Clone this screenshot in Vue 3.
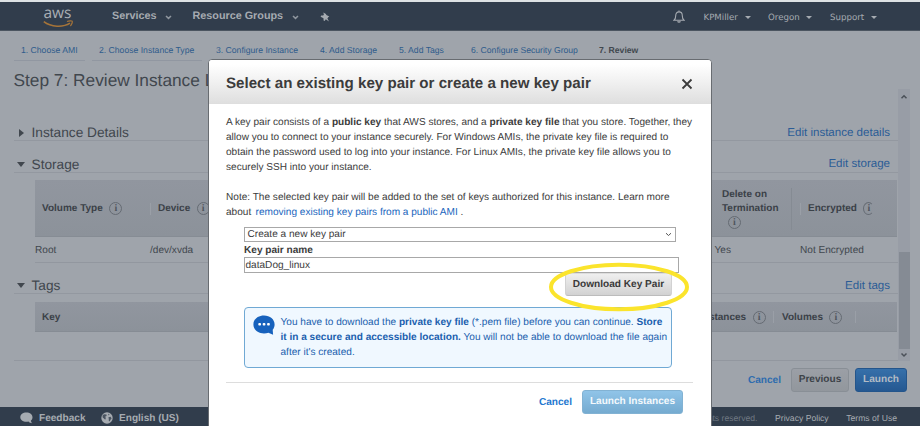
<script setup>
const steps = [
  { label: '1. Choose AMI', width: 71 },
  { label: '2. Choose Instance Type', width: 110 },
  { label: '3. Configure Instance', width: 97 },
  { label: '4. Add Storage', width: 72 },
  { label: '5. Add Tags', width: 65 },
  { label: '6. Configure Security Group', width: 121 },
]
</script>

<template>
  <div class="page">
    <header class="topbar">
      <div class="logo">
        <span class="logo-text">aws</span>
        <svg class="smile" viewBox="0 0 31 8" width="31" height="8">
          <path d="M.8 1.600C8 7.200 20 7.700 27 3.200" stroke-width="1.600" />
          <path d="M24 1.500c2-.9 4.700-.9 5.200-.3.4.7-.3 3.300-1.800 4.800" stroke-width="1.200" />
        </svg>
      </div>
      <span class="menu services">Services</span>
      <svg class="chev" viewBox="0 0 7 5" width="7" height="5"><path d="M1 1l2.500 2.400L6 1" /></svg>
      <span class="menu groups">Resource Groups</span>
      <svg class="chev" viewBox="0 0 7 5" width="7" height="5"><path d="M1 1l2.500 2.400L6 1" /></svg>
      <svg class="pin" viewBox="0 0 10 10" width="10" height="10">
        <path d="M3.300.4L6 1.900 6.300 3.100 9.300 4.400 8.200 5.200 7.400 6.500 9 9.600 5.800 7.300 4.600 9 3.600 8.500 3.500 6.200.6 4.700 1.200 3.600 3.200 3.500 3.900 2.400z" />
      </svg>
      <svg class="bell" viewBox="0 0 12 13" width="12" height="13">
        <path d="M6 .6v1.200M1 10.200c1.700-1.300 1.700-2.300 1.700-4.500C2.700 3.300 4 1.900 6 1.900s3.300 1.400 3.300 3.800c0 2.200 0 3.200 1.700 4.500z" />
        <path d="M4.600 11.300c.4 1.100 2.400 1.100 2.800 0" />
      </svg>
      <span class="account user">KPMiller<i class="caret"></i></span>
      <span class="account region">Oregon<i class="caret"></i></span>
      <span class="account support">Support<i class="caret"></i></span>
    </header>

    <nav class="steps">
      <span v-for="s in steps" :key="s.label" class="step" :style="{ width: s.width + 'px' }">{{ s.label }}</span>
      <span class="step current">7. Review</span>
    </nav>
    <h1>Step 7: Review Instance L</h1>

    <div class="scroller">
      <main class="content">
        <section class="section details">
          <i class="tri right"></i><h2>Instance Details</h2><a>Edit instance details</a>
        </section>
        <section class="section storage">
          <i class="tri down"></i><h2>Storage</h2><a>Edit storage</a>
        </section>
        <div class="table volumes-head">
          <div class="cell">Volume Type<i class="info">i</i></div>
          <div class="cell sep">Device<i class="info">i</i></div>
          <div class="cell tall">Delete on<br>Termination<br><i class="info under">i</i></div>
          <div class="cell sep enc">Encrypted<i class="info cut">i</i></div>
        </div>
        <div class="volumes-row">
          <span>Root</span><span>/dev/xvda</span><span>Yes</span><span>Not Encrypted</span>
        </div>
        <section class="section tags">
          <i class="tri down"></i><h2>Tags</h2><a>Edit tags</a>
        </section>
        <div class="table tags-head">
          <div class="cell">Key</div>
          <div class="cell inst">Instances<i class="info">i</i></div>
          <div class="cell sep vols">Volumes<i class="info">i</i></div>
          <div class="cell sep"></div>
        </div>
      </main>
      <div class="scrollbar">
        <svg viewBox="0 0 8 6" width="8" height="6"><path d="M1.500 4.300L4 1.800l2.500 2.500" /></svg>
        <div class="thumb"></div>
        <svg viewBox="0 0 8 6" width="8" height="6"><path d="M1.500 1.500L4 4l2.500-2.500" /></svg>
      </div>
    </div>

    <div class="actions">
      <a class="cancel">Cancel</a>
      <button class="btn previous">Previous</button>
      <button class="btn launch">Launch</button>
    </div>

    <footer class="footer">
      <svg class="bubble" viewBox="0 0 13 12" width="13" height="12">
        <path d="M6.400.6C9.900.6 12.500 2.600 12.500 5.200c0 1.500-.6 2.600-1.600 3.400.1 1.200.6 2 1.300 2.700-1.600-.1-2.900-.7-3.700-1.700-.7.2-1.400.2-2.100.2C2.900 9.800.3 7.800.3 5.200S2.900.6 6.400.6z" />
      </svg>
      <b class="feedback">Feedback</b>
      <svg class="globe" viewBox="0 0 12 12" width="12" height="12">
        <circle cx="6" cy="6" r="5.700" />
        <path d="M1.500 3.400L3 2.200 5.500 2.600 5.600 4 4.300 4.600 4.800 6.200 4.200 7.800 2.600 6.200 1.700 5.500zM7.200 1.700L8.600 2.200 7.500 3.600zM7.400 5.200L9.600 4.700 10.600 6.400 9.300 8 8.700 9.600 7.700 8.500 7.800 7z" class="land" />
      </svg>
      <b class="lang">English (US)</b>
      <span class="legal">
        <span class="rights">All rights reserved.</span>
        <span class="privacy">Privacy Policy</span>
        <span class="terms">Terms of Use</span>
      </span>
    </footer>

    <div class="modal">
      <div class="modal-head">
        <h3>Select an existing key pair or create a new key pair</h3>
        <svg viewBox="0 0 12 12" width="12" height="12"><path d="M1.500 1.500l9 9M10.500 1.500L1.500 10.500" /></svg>
      </div>
      <div class="modal-body">
        <p>
          A key pair consists of a <b>public key</b> that AWS stores, and a <b>private key file</b> that you store. Together, they<br>
          allow you to connect to your instance securely. For Windows AMIs, the private key file is required to<br>
          obtain the password used to log into your instance. For Linux AMIs, the private key file allows you to<br>
          securely SSH into your instance.
        </p>
        <p class="note">
          Note: The selected key pair will be added to the set of keys authorized for this instance. Learn more<br>
          about <a>removing existing key pairs from a public AMI</a> .
        </p>
        <div class="form">
          <div class="select">
            <span>Create a new key pair</span>
            <svg viewBox="0 0 7 5" width="7" height="5"><path d="M1 1.200l2.500 2.300L6 1.200" /></svg>
          </div>
          <label>Key pair name</label>
          <div class="input">dataDog_linux</div>
          <button class="btn download">Download Key Pair</button>
          <div class="notice">
            <svg viewBox="0 0 22 20" width="22" height="20">
              <path d="M11 .4c6 0 10.600 3.800 10.600 9 0 2-.7 3.900-1.900 5.300l.4 5-4.700-2c-1.300.5-2.800.7-4.400.7C5 18.400.4 14.600.4 9.400S5 .4 11 .4z" fill="#1762bd" />
              <rect x="5.300" y="8.100" width="2.700" height="2.500" rx=".8" fill="#fff" />
              <rect x="9.700" y="8.100" width="2.700" height="2.500" rx=".8" fill="#fff" />
              <rect x="14.100" y="8.100" width="2.700" height="2.500" rx=".8" fill="#fff" />
            </svg>
            <div>
              You have to download the <b>private key file</b> (*.pem file) before you can continue. <b>Store</b><br>
              <b>it in a secure and accessible location.</b> You will not be able to download the file again<br>
              after it's created.
            </div>
          </div>
        </div>
        <div class="modal-actions">
          <a class="cancel">Cancel</a>
          <button class="btn launch-instances">Launch Instances</button>
        </div>
      </div>
    </div>

    <svg class="highlight" viewBox="0 0 142 50" width="142" height="50">
      <ellipse cx="71" cy="25" rx="68" ry="22.300" />
    </svg>
  </div>
</template>

<style>
body { margin: 0; overflow: hidden; }
</style>

<style scoped>
* { box-sizing: border-box; }
.page {
  position: relative;
  display: flex;
  flex-direction: column;
  width: 920px;
  height: 426px;
  overflow: hidden;
  background: #9fa4ab;
  color: #41474e;
  font: 10.09px/15px "Liberation Sans", Arial, sans-serif;
  text-rendering: geometricPrecision;
  white-space: nowrap;
}
h1, h2, h3, p { margin: 0; font-weight: normal; }
svg { flex: none; display: block; }
i { font-style: normal; }

.topbar {
  display: flex;
  align-items: center;
  flex: none;
  height: 31px;
  padding-top: 1px;
  border-top: 2px solid #dde2e4;
  border-bottom: 1px solid #4b5560;
  background: #313d4c;
  color: #a6abb1;
}
.logo { width: 32px; height: 26px; margin-left: 43px; }
.logo-text { display: block; height: 15px; padding-left: .5px; font: 500 15.500px/17px "Open Sans", sans-serif; color: #a9aeb4; }
.smile { fill: none; stroke: #a57439; margin-top: 1px; }
.menu { font-size: 10.800px; font-weight: bold; }
.services { width: 45px; margin-left: 37px; }
.groups { width: 91px; margin-left: 20.500px; }
.chev { margin: 1px 0 0 8px; fill: none; stroke: #8f969e; stroke-width: 1.500; }
.pin { margin-left: 21.500px; fill: #a6abb1; }
.bell { margin-left: 343px; fill: none; stroke: #a6abb1; stroke-width: 1.100; }
.account { display: flex; align-items: center; justify-content: space-between; font: 8.650px/15px "DejaVu Sans", sans-serif; padding-top: 3px; }
.user { width: 47px; margin-left: 18.500px; }
.region { width: 44px; margin-left: 17.500px; }
.support { width: 46.500px; margin-left: 18px; }
.caret { margin-top: -1px; border: solid transparent; border-width: 3.500px 3px 0; border-top-color: #a6abb1; }

.steps { display: flex; flex: none; gap: 7px; height: 29.500px; padding: 11.500px 0 0 14px; font-size: 8.640px; line-height: 15px; color: #2f5c8c; }
.step { flex: none; padding-left: 7px; border-bottom: 1.500px solid #9197a1; }
.current { color: #41474e; font-weight: bold; border: 0; }
h1 { flex: none; height: 28.500px; padding-left: 13.500px; font-size: 17.300px; line-height: 39px; }

.scroller { display: flex; flex: none; height: 272px; }
.content { width: 884px; margin-left: 14px; border-bottom: 1px solid #92979f; }
.section { display: flex; align-items: center; border-bottom: 1px solid #9398a0; padding-right: 8px; }
.section h2 { flex: 1; font-size: 13.700px; line-height: 16px; }
.section a { font-size: 11.550px; color: #2b5c96; }
.details { height: 20px; margin-top: 32px; padding-top: 5px; }
.storage { height: 20px; margin-top: 12px; padding-top: 4px; }
.tags { height: 20px; margin-top: 11px; padding-top: 5px; }
.tri { width: 17.500px; }
.tri::before { content: ""; display: block; width: 0; border: solid transparent; margin-top: -1px; }
.right::before { margin-left: 4.500px; border-width: 4px 0 4px 5px; border-left-color: #41474e; }
.down::before { margin-left: 3px; border-width: 5px 4px 0; border-top-color: #41474e; }
.table { display: grid; padding-top: 1px; margin: 8px 1px 0 21px; background: linear-gradient(#91969f, #8c929a); font-weight: bold; color: #3b4148; font-size: 10px; align-items: center; }
.volumes-head { height: 57px; margin-top: 7px; grid-template-columns: 115px 564px 78px 1fr; border-bottom: 1px solid #868c94; }
.tags-head { height: 30px; grid-template-columns: 640px 98px 82px 1fr; border-bottom: 1px solid #868c94; }
.cell { display: flex; align-items: center; height: 12px; padding-left: 7px; }
.sep { border-left: 1px solid #9a9fa7; }
.info { display: inline-block; width: 13px; height: 13px; flex: none; margin-left: 6.500px; border: 1px solid #656b73; border-radius: 50%; font: bold 10px/12px "Liberation Serif", serif; text-align: center; color: #50565e; }
.tall { display: block; height: 42px; line-height: 14px; padding-left: 8px; border-right: 1px solid #858b93; }
.info.under { margin-left: 6px; vertical-align: top; }
.enc { margin-left: 8px; }
.cut { border-right-color: transparent; width: 11px; }
.volumes-row { display: grid; grid-template-columns: 115px 564.500px 85.500px 1fr; height: 26px; margin-left: 21px; line-height: 27px; border-bottom: 1px solid #92979f; }
.inst { padding-left: 25px; }
.vols { padding-left: 8px; }
.scrollbar { display: flex; flex-direction: column; align-items: center; justify-content: space-between; width: 12px; padding: 5px 0 3px; background: #989da6; }
.scrollbar svg { fill: none; stroke: #4b5159; stroke-width: 1.500; }
.thumb { width: 11px; height: 97px; margin-top: 148px; background: #858b94; }

.actions { display: flex; align-items: flex-start; justify-content: flex-end; flex: none; height: 46px; padding: 7px 13px 0 0; }
.cancel { font-weight: bold; line-height: 25px; color: #2e6cae; }
.btn { height: 24px; padding: 0; border: 1px solid; border-radius: 3px; font: bold 10.090px/22px "Liberation Sans", Arial, sans-serif; text-rendering: geometricPrecision; }
.previous { width: 58px; margin: 0 6px 0 10px; color: #3d4349; border-color: #898f96; background: linear-gradient(#9b9fa6, #92979d); }
.launch { width: 52px; color: #b2bbc5; border-color: #24558b; background: linear-gradient(#3670aa, #255891); }

.footer { display: flex; align-items: center; height: 20px; background: #313d4c; color: #a6abb1; padding-top: 3px; }
.bubble { margin: -1px 0 0 20px; fill: #a6abb1; }
.feedback { width: 47px; margin-left: 6px; }
.globe { margin: -1px 0 0 14.500px; fill: #a6abb1; }
.land { fill: #4a5461; }
.lang { margin-left: 6.500px; }
.legal { display: flex; flex: 1; justify-content: flex-end; font-size: 8.640px; }
.rights { color: #6f7882; }
.privacy { margin-left: 17.500px; }
.terms { margin: 0 23px 0 17.500px; }

.modal {
  position: absolute;
  left: 208px;
  top: 59px;
  width: 504px;
  height: 380px;
  border: 1px solid #686c71;
  border-radius: 4px;
  background: #fff;
  color: #3c3c3c;
  overflow: hidden;
}
.modal-head { display: flex; align-items: center; justify-content: space-between; height: 44px; padding: 4px 18px 0 17px; border-bottom: 1px solid #dedede; background: linear-gradient(#fff 10%, #dfdfdf); }
h3 { font-size: 15.130px; font-weight: bold; line-height: 20px; color: #3c3c3c; }
.modal-head svg { fill: none; stroke: #3a3a3a; stroke-width: 1.800; margin-top: 1px; }
.modal-body { padding: 11px 18px 0 17px; line-height: 15.100px; }
.note { margin-top: 15px; }
.note a { margin-left: 1.500px; color: #1a66bd; }
.form { display: flex; flex-direction: column; margin: 6px 0 0 18px; }
.select { display: flex; align-items: center; justify-content: space-between; width: 432px; height: 15px; padding: 1px 3px 0 2.500px; border: 1px solid #a8a8a8; }
.select svg { fill: none; stroke: #555; stroke-width: 1; }
label { font-weight: bold; line-height: 15px; height: 15px; padding-top: 1px; }
.input { width: 435px; height: 16px; padding: 1px 0 0 .5px; border: 1px solid #a8a8a8; line-height: 14px; }
.download { width: 107px; margin-left: 321px; color: #3a3a3a; border-color: #ddd #d2d2d2 #bcbcbc; background: linear-gradient(#efefef, #d2d2d2); height: 23px; line-height: 21px; }
.notice { display: flex; width: 428px; height: 61px; margin-top: 11px; padding: 7px 0 0 8px; border: 1px solid #70a9d4; border-radius: 4px; background: #f0f8ff; color: #1b5fae; }
.notice > div { margin-left: 5.500px; }
.modal-actions { display: flex; justify-content: flex-end; align-items: flex-start; margin-top: 14px; padding: 7px 10px 0 0; border-top: 1px solid #ddd; }
.modal-actions .cancel { color: #2377cf; }
.launch-instances { width: 101px; margin-left: 10px; color: #f4f9fc; border-color: #82b2d3; background: linear-gradient(#90c4e8, #75abd0); }

.highlight { position: absolute; left: 548px; top: 261.500px; fill: none; stroke: #fbe42c; stroke-width: 4; }
</style>
